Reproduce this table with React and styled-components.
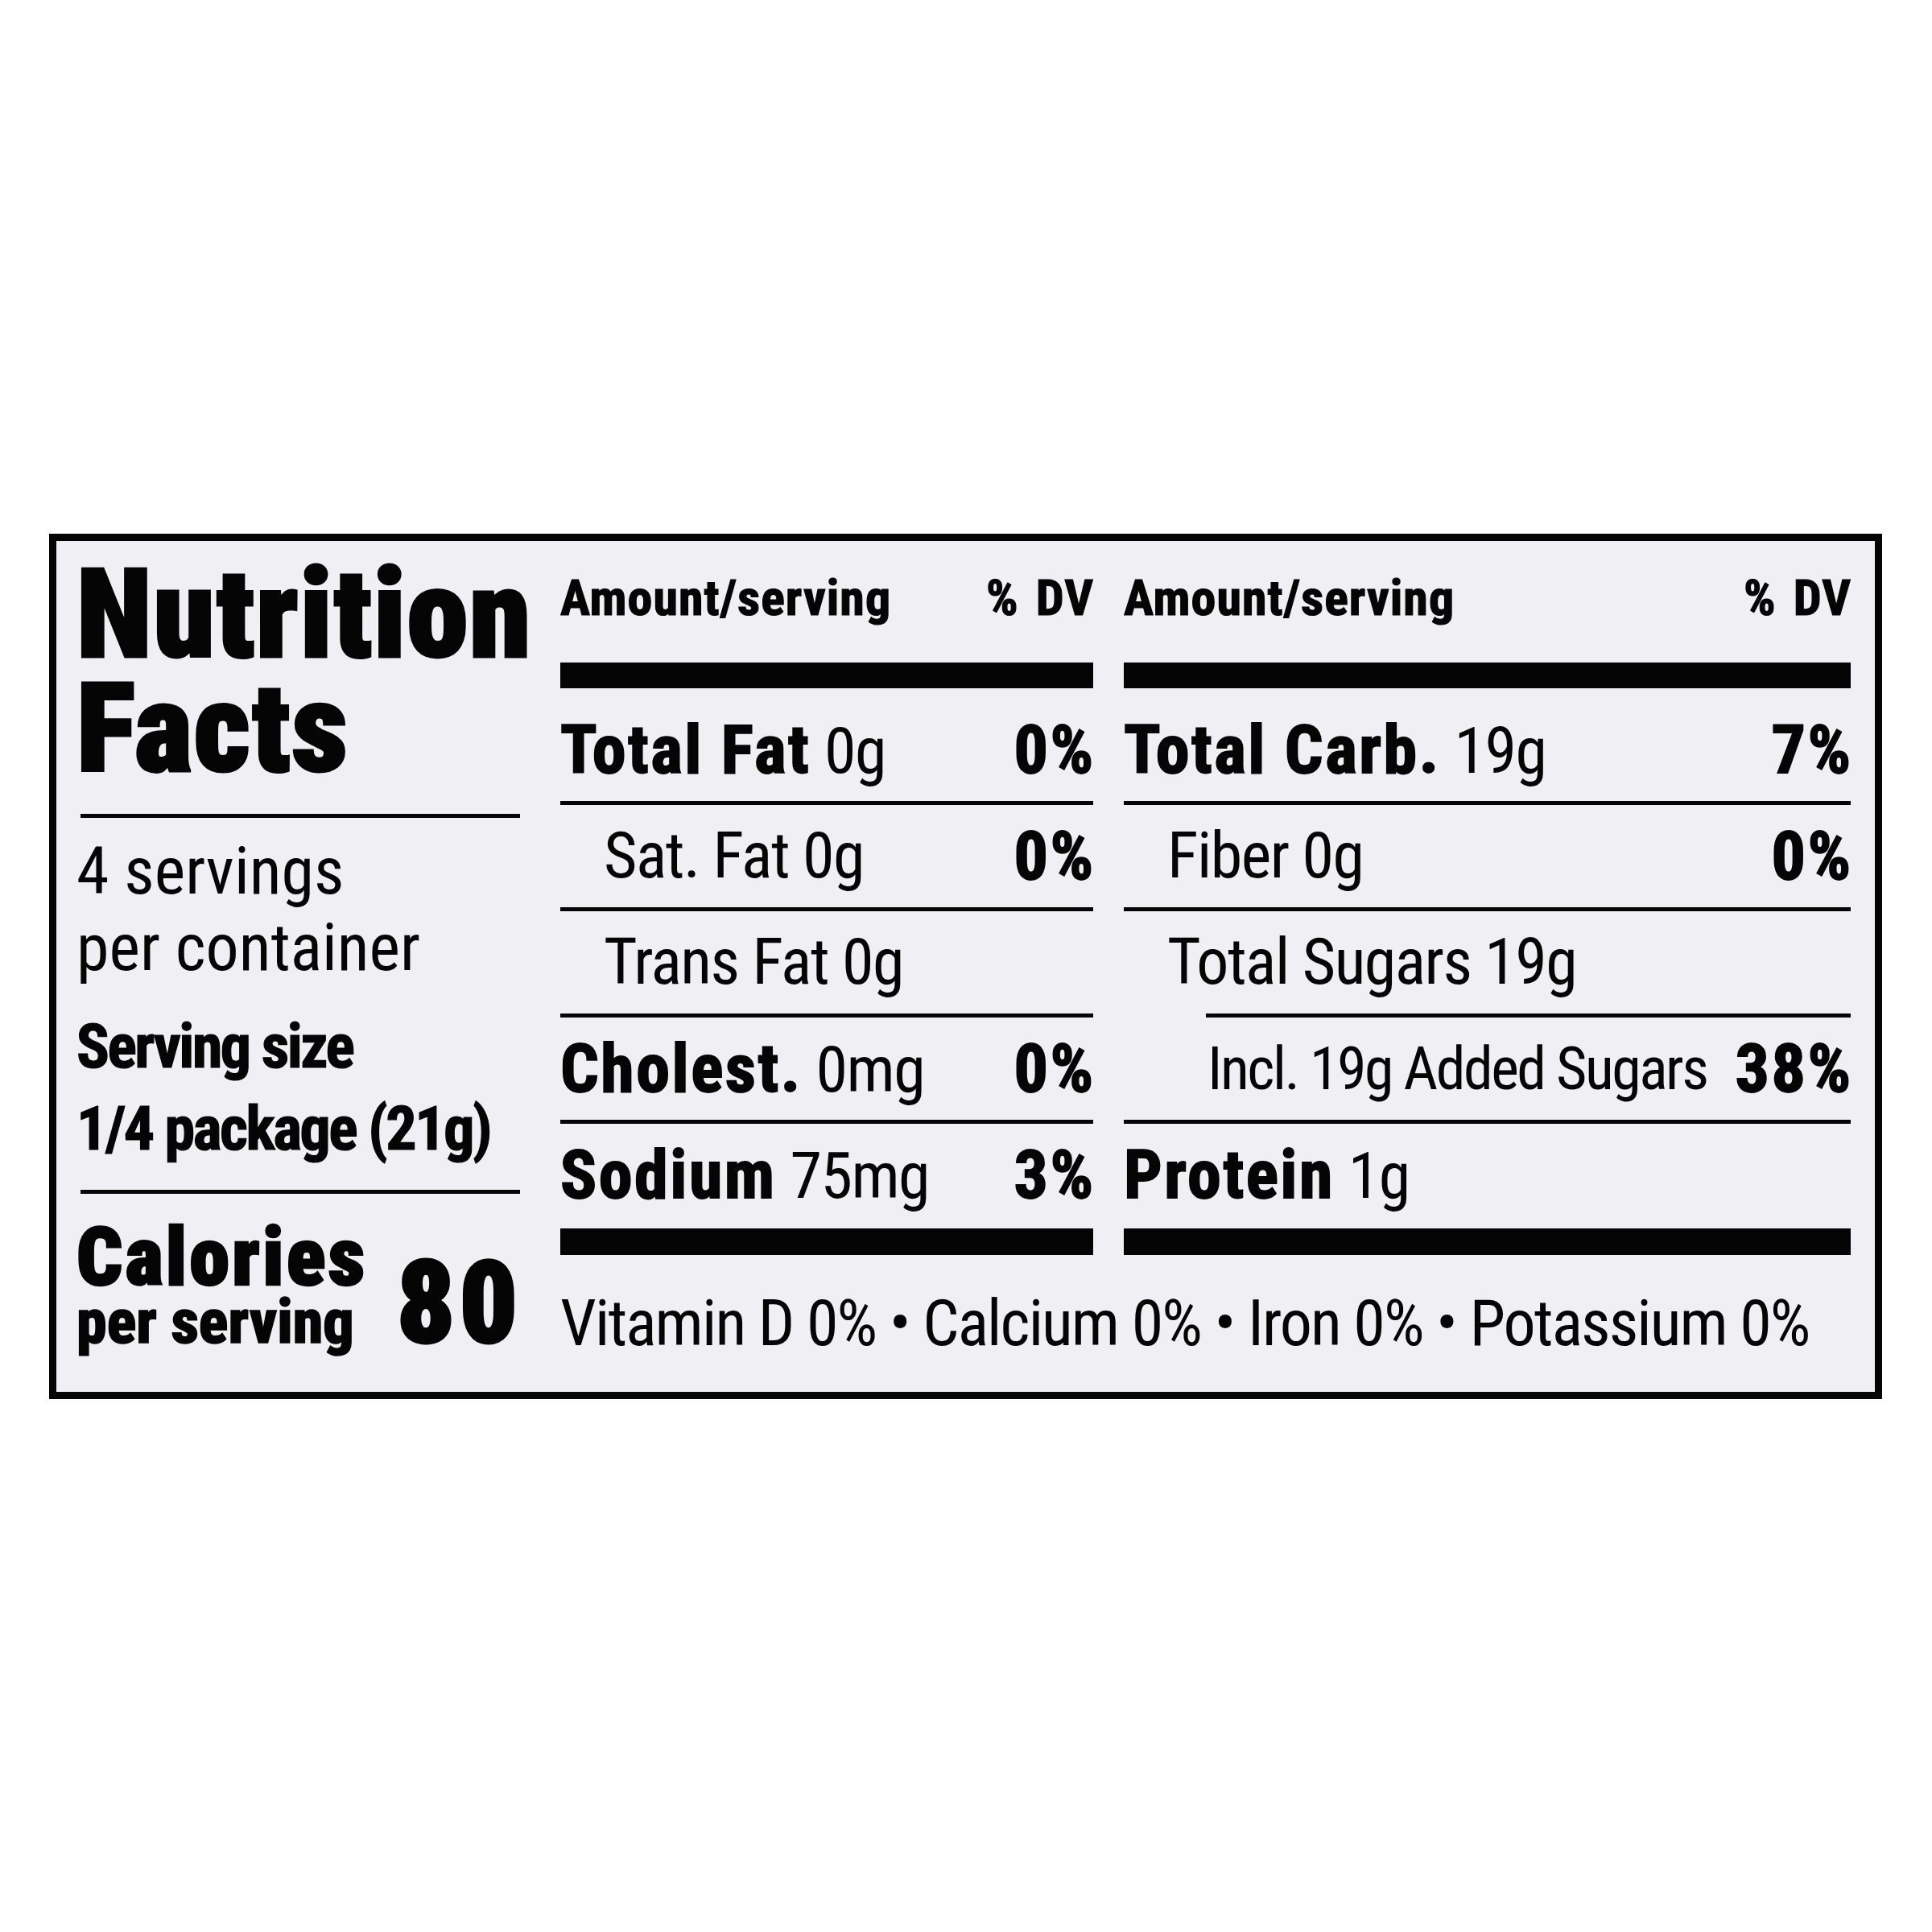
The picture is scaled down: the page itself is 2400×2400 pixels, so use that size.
import styled, { createGlobalStyle } from "styled-components";

const GlobalStyle = createGlobalStyle`
   html, body {
      margin: 0;
      padding: 0;
      background: #ffffff;
   }
   body {
      font-family: "Roboto Condensed", "Liberation Sans", sans-serif;
      color: #050505;
   }
`

const leftFacts = [
   { name: "Total Fat", amount: "0g", dv: "0%" },
   { name: "Sat. Fat", amount: "0g", dv: "0%", sub: 1 },
   { name: "Trans Fat", amount: "0g", sub: 1 },
   { name: "Cholest.", amount: "0mg", dv: "0%" },
   { name: "Sodium", amount: "75mg", dv: "3%" },
]

const rightFacts = [
   { name: "Total Carb.", amount: "19g", dv: "7%" },
   { name: "Fiber", amount: "0g", dv: "0%", sub: 1 },
   { name: "Total Sugars", amount: "19g", sub: 1, ruleInset: 102 },
   { name: "Incl. 19g Added Sugars", dv: "38%", sub: 2 },
   { name: "Protein", amount: "1g" },
]

const FactsColumn = ({ facts }) => (
   <Column>
      <Header>
         <span>Amount/serving</span>
         <span>% DV</span>
      </Header>
      <ThickBar />
      {
         facts.map((f, i) => (
            <div key={f.name}>
               <Row>
                  <Label $sub={f.sub}>
                     {f.sub ? f.name : <Strong>{f.name}</Strong>}
                     {f.amount && ` ${f.amount}`}
                  </Label>
                  {f.dv && <Strong $end>{f.dv}</Strong>}
               </Row>
               {i < facts.length - 1 && <Rule $inset={f.ruleInset || 0} />}
            </div>
         ))
      }
      <ThickBar $bottom />
   </Column>
)

const App = () => {
   return (
      <Page>
         <GlobalStyle />
         <Panel>
            <Side>
               <Title>Nutrition<br />Facts</Title>
               <SideRule />
               <Servings>4 servings<br />per container</Servings>
               <ServingSize>Serving size<br />1/4 package (21g)</ServingSize>
               <SideRule $top={25} />
               <CaloriesBlock>
                  <div>
                     <CaloriesLabel>Calories</CaloriesLabel>
                     <PerServing>per serving</PerServing>
                  </div>
                  <CaloriesValue>80</CaloriesValue>
               </CaloriesBlock>
            </Side>
            <Main>
               <FactsColumn facts={leftFacts} />
               <FactsColumn facts={rightFacts} />
               <Vitamins>Vitamin D 0% • Calcium 0% • Iron 0% • Potassium 0%</Vitamins>
            </Main>
         </Panel>
      </Page>
   );
}

// styles
const Page = styled.div`
   width: 2400px;
   height: 2400px;
   box-sizing: border-box;
   padding: 663px 0 0 61px;
`

const Panel = styled.div`
   width: 2277px;
   height: 1075px;
   box-sizing: border-box;
   border: 9px solid #050505;
   background: #efeff4;
   display: grid;
   grid-template-columns: 551px 1fr;
   column-gap: 50px;
   padding: 0 31px 0 25px;
`

const Side = styled.div`
   display: flex;
   flex-direction: column;
`

const Title = styled.h1`
   margin: 21px 0 0 0;
   font-size: 154px;
   line-height: 142px;
   font-weight: 900;
   letter-spacing: 1.5px;
   -webkit-text-stroke: 3px currentColor;
`

const SideRule = styled.div`
   height: 5px;
   margin: ${p => p.$top || 34}px 0 0 5px;
   background: #050505;
`

const Servings = styled.div`
   margin-top: 19px;
   font-size: 82px;
   line-height: 95px;
`

const ServingSize = styled.div`
   margin-top: 24px;
   font-size: 76px;
   line-height: 102px;
   font-weight: 700;
   letter-spacing: -2.5px;
   white-space: nowrap;
   -webkit-text-stroke: 1.2px currentColor;
`

const CaloriesBlock = styled.div`
   display: flex;
   align-items: flex-end;
   justify-content: space-between;
   margin-top: 39px;
   margin-right: -2px;
`

const CaloriesLabel = styled.div`
   font-size: 100px;
   line-height: 80px;
   font-weight: 900;
   letter-spacing: 3.5px;
   -webkit-text-stroke: 2.5px currentColor;
`

const PerServing = styled.div`
   font-size: 76px;
   line-height: 80px;
   font-weight: 800;
   -webkit-text-stroke: 1.5px currentColor;
`

const CaloriesValue = styled.div`
   font-size: 142px;
   line-height: 124px;
   font-weight: 900;
   letter-spacing: 5px;
   -webkit-text-stroke: 3px currentColor;
`

const Main = styled.div`
   display: grid;
   grid-template-columns: 662px 903px;
   column-gap: 38px;
   align-content: start;
`

const Column = styled.div`
   display: flex;
   flex-direction: column;
`

const Header = styled.div`
   display: flex;
   justify-content: space-between;
   padding-top: 35px;
   margin-bottom: 44px;
   font-size: 62px;
   line-height: 72px;
   font-weight: 700;
   letter-spacing: 1px;
   word-spacing: 6px;
   white-space: nowrap;
   -webkit-text-stroke: 1.2px currentColor;

   & > span:last-child {
      margin-right: -1px;
   }
`

const ThickBar = styled.div`
   height: ${p => p.$bottom ? 33 : 32}px;
   margin: ${p => p.$bottom ? "3px 0 0" : "0 0 13px"};
   background: #050505;
`

const Row = styled.div`
   display: flex;
   justify-content: space-between;
   height: 127px;
   font-size: 80px;
   line-height: 127px;
   letter-spacing: -1.5px;
   white-space: nowrap;
`

const Label = styled.span`
   padding-left: ${p => p.$sub === 2 ? 104 : p.$sub ? 54 : 0}px;
   font-size: ${p => p.$sub === 2 ? 74 : 80}px;
   letter-spacing: ${p => p.$sub === 2 ? -2.5 : -1.5}px;
`

const Strong = styled.span`
   font-size: 84px;
   font-weight: 700;
   letter-spacing: 2.5px;
   margin-right: ${p => p.$end ? -2.5 : 0}px;
   -webkit-text-stroke: 1.8px currentColor;
`

const Rule = styled.div`
   height: 5px;
   margin-left: ${p => p.$inset}px;
   background: #050505;
`

const Vitamins = styled.div`
   grid-column: 1 / -1;
   margin-top: 39px;
   font-size: 80px;
   line-height: 93px;
   letter-spacing: -1.9px;
   white-space: nowrap;
`

export default App;
